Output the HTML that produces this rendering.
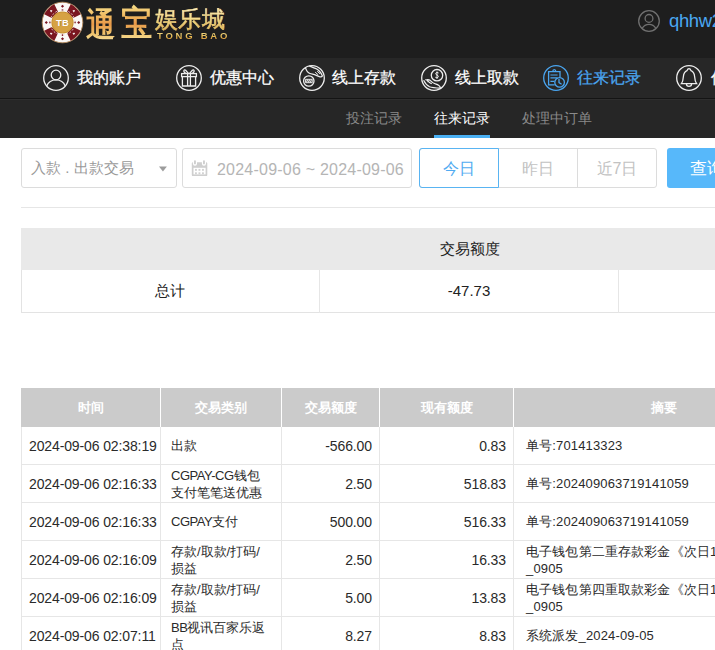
<!DOCTYPE html>
<html><head><meta charset="utf-8">
<style>
*{box-sizing:border-box;margin:0;padding:0}
html,body{width:715px;height:650px;overflow:hidden;background:#fff;font-family:"Liberation Sans",sans-serif;color:#333}
.abs{position:absolute}
#top{position:absolute;left:0;top:0;width:715px;height:58px;background:#1e1e1e}
#nav{position:absolute;left:0;top:58px;width:715px;height:40px;background:#272727}
#navline{position:absolute;left:0;top:98px;width:715px;height:1px;background:#141414}
#sub{position:absolute;left:0;top:99px;width:715px;height:39px;background:#262626;border-top:1px solid #2e2e2e}
.nt{position:absolute;top:68px;font-size:16px;line-height:20px;color:#fff;white-space:nowrap;-webkit-text-stroke:0.25px currentColor}
.ic{position:absolute;top:65px;width:26px;height:26px}
.st{position:absolute;top:108px;font-size:14px;line-height:20px;color:#8a8a8a;white-space:nowrap}
.box{position:absolute;top:148px;height:40px;border:1px solid #dcdcdc;border-radius:3px;background:#fff}
.gbtn{position:absolute;top:149px;height:40px;font-size:16px;line-height:40px;text-align:center;color:#c2c2c2}
table{border-collapse:collapse}
#sum{position:absolute;left:21px;top:228px;width:897px}
#sum td{border:1px solid #e3e3e3;height:42px;text-align:center;font-size:15px;color:#222}
#sum .h td{background:#e9e9e9;border-color:#e9e9e9}
#main{position:absolute;left:21px;top:388px;table-layout:fixed;width:793px;border-collapse:separate;border-spacing:0}
#main th{background:#cbcbcb;color:#fff;font-weight:bold;font-size:13px;height:39px;border:none;border-right:1px solid #fff;text-align:center;padding:0}
#main td{border-right:1px solid #e6e6e6;border-bottom:1px solid #e6e6e6;height:38px;font-size:13px;line-height:17px;color:#2a2a2a;padding:0 9px 0 10px;white-space:nowrap;overflow:hidden}
#main td:first-child{border-left:1px solid #e6e6e6;font-size:14px;letter-spacing:-0.12px;padding-left:7px;padding-top:1px}
.l{letter-spacing:-0.45px}
#main td.r{font-size:14px;letter-spacing:-0.1px;padding-right:7px;padding-top:1px}
#main td:last-child{padding-left:12px;letter-spacing:0.15px}
.l{letter-spacing:-0.45px}
#main td.r{text-align:right}
</style></head><body>
<div id="top"></div>
<div id="nav"></div>
<div id="navline"></div>
<div id="sub"></div>

<!-- logo chip -->
<svg class="abs" style="left:41px;top:1px" width="43" height="43" viewBox="-21.5 -21.5 43 43">
  <defs><clipPath id="cc"><circle r="19.9"/></clipPath></defs>
  <circle r="20.3" fill="#fbf8f6" stroke="#b48a5c" stroke-width="0.9"/>
  <g fill="#7a1620" clip-path="url(#cc)"><path d="M10.75 4.53 L19.37 8.63 L8.63 19.37 L4.53 10.75 Z"/><path d="M-4.53 10.75 L-8.63 19.37 L-19.37 8.63 L-10.75 4.53 Z"/><path d="M-10.75 -4.53 L-19.37 -8.63 L-8.63 -19.37 L-4.53 -10.75 Z"/><path d="M4.53 -10.75 L8.63 -19.37 L19.37 -8.63 L10.75 -4.53 Z"/></g>
  <g fill="#7a1620"><rect x="15.10" y="-1.10" width="2.2" height="2.2" transform="rotate(45 16.20 0.00)"/><circle cx="12.60" cy="0.00" r="0.9"/><rect x="-1.10" y="15.10" width="2.2" height="2.2" transform="rotate(45 0.00 16.20)"/><circle cx="0.00" cy="12.60" r="0.9"/><rect x="-17.30" y="-1.10" width="2.2" height="2.2" transform="rotate(45 -16.20 0.00)"/><circle cx="-12.60" cy="0.00" r="0.9"/><rect x="-1.10" y="-17.30" width="2.2" height="2.2" transform="rotate(45 -0.00 -16.20)"/><circle cx="-0.00" cy="-12.60" r="0.9"/></g>
  <g fill="#f5eeee"><path d="M11.31 12.61 L10.11 10.91 A0.7 0.7 0 0 1 11.31 10.41 A0.7 0.7 0 0 1 12.51 10.91 Z"/><path d="M-11.31 12.61 L-12.51 10.91 A0.7 0.7 0 0 1 -11.31 10.41 A0.7 0.7 0 0 1 -10.11 10.91 Z"/><path d="M-11.31 -10.01 L-12.51 -11.71 A0.7 0.7 0 0 1 -11.31 -12.21 A0.7 0.7 0 0 1 -10.11 -11.71 Z"/><path d="M11.31 -10.01 L10.11 -11.71 A0.7 0.7 0 0 1 11.31 -12.21 A0.7 0.7 0 0 1 12.51 -11.71 Z"/></g>
  <circle r="12.5" fill="none" stroke="#f2e8e8" stroke-width="0.9" stroke-dasharray="1.8 1.6"/>
  <circle r="11.1" fill="#c48c2c"/>
  <circle r="10.3" fill="#d6a244"/>
  <text x="0.3" y="3.9" font-family="Liberation Sans" font-size="9.6" font-weight="bold" fill="#8a6020" text-anchor="middle">TB</text>
  <text x="0" y="3.5" font-family="Liberation Sans" font-size="9.6" font-weight="bold" fill="#fff" text-anchor="middle">TB</text>
</svg>
<!-- logo text -->
<div class="abs" style="left:86px;top:5px;font-size:29px;line-height:34px;font-weight:bold;transform:scaleY(1.13);transform-origin:0 0;background:linear-gradient(#f7e08a 0%,#f0b860 30%,#e89848 50%,#efc068 72%,#f8e8a8 100%);-webkit-background-clip:text;background-clip:text;-webkit-text-fill-color:transparent">通</div>
<div class="abs" style="left:121px;top:4px;font-size:31px;line-height:35px;font-weight:bold;transform:scaleY(1.12);transform-origin:0 0;background:linear-gradient(#f7e08a 0%,#f0b860 30%,#e89848 50%,#efc068 72%,#f8e8a8 100%);-webkit-background-clip:text;background-clip:text;-webkit-text-fill-color:transparent">宝</div>
<div class="abs" style="left:155px;top:8px;font-size:22.5px;line-height:24px;letter-spacing:0.3px;-webkit-text-stroke:0.35px #f0d07a;background:linear-gradient(#fcf2c8 0%,#f2d888 50%,#deae4c 100%);-webkit-background-clip:text;background-clip:text;-webkit-text-fill-color:transparent">娱乐城</div>
<div class="abs" style="left:157px;top:31px;font-size:9.5px;line-height:9px;font-weight:bold;letter-spacing:2.75px;background:linear-gradient(#f6e39a 0%,#e8bd55 60%,#d08a30 100%);-webkit-background-clip:text;background-clip:text;-webkit-text-fill-color:transparent">TONG BAO</div>
<!-- user top right -->
<svg class="abs" style="left:637px;top:9px" width="24" height="24" viewBox="0 0 24 24" fill="none" stroke="#707070" stroke-width="1.3">
  <circle cx="12" cy="12" r="10.3"/>
  <circle cx="12" cy="9.4" r="3.9"/>
  <path d="M5.2 19.4 A7.8 7.8 0 0 1 18.8 19.4"/>
</svg>
<div class="abs" style="left:669px;top:9px;font-size:18.5px;line-height:24px;letter-spacing:-0.4px;color:#4aa8f2">qhhw2</div>

<!-- nav icons -->
<svg class="ic" style="left:43px" viewBox="0 0 26 26" fill="none" stroke="#eee" stroke-width="1.3">
  <circle cx="13" cy="13" r="12.3"/>
  <circle cx="13" cy="10" r="4.8"/>
  <path d="M3.6 21.2 A10.2 10.2 0 0 1 22.4 21.2"/>
</svg>
<div class="nt" style="left:77px">我的账户</div>

<svg class="ic" style="left:176px" viewBox="0 0 26 26" fill="none" stroke="#eee" stroke-width="1.3">
  <circle cx="13" cy="13" r="12.3"/>
  <rect x="5.6" y="8.6" width="14.8" height="3"/>
  <path d="M6.4 11.6 V21 H19.6 V11.6"/>
  <path d="M11.6 8.6 V21 M14.4 8.6 V21"/>
  <path d="M12.4 8.4 L9.6 5.2 C9 4.6 8 4.8 7.9 5.6 C7.8 6.4 8.4 7.8 10 8.4 M13.6 8.4 L16.4 5.2 C17 4.6 18 4.8 18.1 5.6 C18.2 6.4 17.6 7.8 16 8.4"/>
</svg>
<div class="nt" style="left:210px">优惠中心</div>

<svg class="ic" style="left:299px" viewBox="0 0 26 26" fill="none" stroke="#eee" stroke-width="1.3">
  <circle cx="13" cy="13" r="12.3"/>
  <circle cx="9.8" cy="16" r="5.2"/>
  <path d="M6.6 14.3 H13.2 V17.7 H6.6 Z" stroke-width="1"/>
  <path d="M7.4 17.3 L8.4 14.7 L9.4 17.3 L10.4 14.7 L11.4 17.3 L12.4 14.7" stroke-width="0.9"/>
  <path d="M6.4 2.6 C7.4 5.6 9 7.8 11 8.5 C13 9.2 15 9.4 16.8 10.2 C18.4 10.9 19.6 11.6 21 11.8 C22 12 23 11.6 23.4 10.9 C21.6 6.6 19 4.3 16.5 3.3 C14.5 2.6 12.5 2 10.4 1.2"/>
  <path d="M16.2 7.2 L19.2 9.8 M18.2 6.2 L21 8.8" stroke-width="1"/>
</svg>
<div class="nt" style="left:332px">线上存款</div>

<svg class="ic" style="left:421px" viewBox="0 0 26 26" fill="none" stroke="#eee" stroke-width="1.3">
  <circle cx="13" cy="13" r="12.3"/>
  <circle cx="16" cy="10.2" r="5.7"/>
  <path d="M17.6 8 C17 7.2 14.7 7.2 14.7 8.7 C14.7 10.2 17.4 9.9 17.4 11.5 C17.4 13 15 13.1 14.3 12.2 M16 6.5 V13.9" stroke-width="1"/>
  <path d="M2.6 15.2 C4 18 6 20.6 8.6 21.8 C11 22.8 14 23 19.5 23.2 C19.2 21.2 17.5 19.6 14.5 18.8 C12.8 18.3 11.6 17.8 10.6 16.6 C9.6 15.5 8 14.4 6.6 14.6 C6 15 6.4 16 7.4 17 M4.4 14.6 C5.6 14.4 6.8 15.6 7.8 16.8 C8.6 17.8 9.6 18.4 10.8 18.6" stroke-width="1.2"/>
</svg>
<div class="nt" style="left:455px">线上取款</div>

<svg class="ic" style="left:543px" viewBox="0 0 26 26" fill="none" stroke="#4aa5ef" stroke-width="1.3">
  <circle cx="13" cy="13" r="12.3"/>
  <path d="M11.6 19.8 H5.6 V6.6 H17 V12.2"/>
  <path d="M9.8 6.6 C9.8 4 12.8 4 12.8 6.6"/>
  <path d="M7.4 10 H14.6 M7.4 12.8 H14.6 M7.4 16.4 H11.4" stroke-width="1.2"/>
  <circle cx="16.6" cy="17.4" r="4.8"/>
  <path d="M16 13.9 V17.6 L18.6 19.2"/>
</svg>
<div class="nt" style="left:577px;color:#4aa5ef">往来记录</div>

<svg class="ic" style="left:676px;top:65px" viewBox="0 0 26 26" fill="none" stroke="#eee" stroke-width="1.3">
  <circle cx="13" cy="13" r="12.3"/>
  <path d="M5.4 18.6 H20.6 C19 16.6 18.8 14.5 18.6 11.5 C18.4 8.5 17 6.5 15 5.6 C14.6 4.4 13.8 3.6 13 3.6 C12.2 3.6 11.4 4.4 11 5.6 C9 6.5 7.6 8.5 7.4 11.5 C7.2 14.5 7 16.6 5.4 18.6 Z"/>
  <path d="M10.4 18.7 C10.4 22.2 15.6 22.2 15.6 18.7"/>
</svg>
<div class="nt" style="left:711px">信</div>

<!-- sub nav -->
<div class="st" style="left:346px">投注记录</div>
<div class="st" style="left:434px;color:#fff">往来记录</div>
<div class="abs" style="left:434px;top:135px;width:56px;height:3px;background:#4ab0f3"></div>
<div class="st" style="left:522px">处理中订单</div>

<!-- filters -->
<div class="box" style="left:21px;width:156px"></div>
<div class="abs" style="left:31px;top:158px;font-size:15px;line-height:20px;color:#999">入款 . 出款交易</div>
<svg class="abs" style="left:158px;top:166px" width="10" height="7" viewBox="0 0 10 7"><path d="M1 0.4 H8.9 L4.95 5.6 Z" fill="#9c9c9c"/></svg>

<div class="box" style="left:182px;width:230px"></div>
<svg class="abs" style="left:187px;top:156px" width="25" height="24" viewBox="0 0 25 24">
  <rect x="4.8" y="6.3" width="15.5" height="13.8" rx="1.2" fill="#cfcfcf"/>
  <rect x="6.5" y="11.8" width="12.1" height="6.6" fill="#fff"/>
  <g fill="#d2d2d2"><rect x="8" y="12.9" width="1.9" height="1.9"/><rect x="11.5" y="12.9" width="1.9" height="1.9"/><rect x="15" y="12.9" width="1.9" height="1.9"/><rect x="8" y="16.3" width="1.9" height="1.9"/><rect x="11.5" y="16.3" width="1.9" height="1.9"/><rect x="15" y="16.3" width="1.9" height="1.9"/></g>
  <rect x="5.9" y="3.2" width="4.1" height="6.6" rx="2" fill="#fff"/>
  <rect x="14.9" y="3.2" width="4.1" height="6.6" rx="2" fill="#fff"/>
  <rect x="7" y="4.3" width="1.9" height="4" rx="0.9" fill="#cfcfcf"/>
  <rect x="16" y="4.3" width="1.9" height="4" rx="0.9" fill="#cfcfcf"/>
</svg>
<div class="abs" style="left:217px;top:159.5px;font-size:16px;line-height:20px;letter-spacing:0.22px;color:#b5b5b5">2024-09-06 ~ 2024-09-06</div>

<div class="box" style="left:419px;width:238px"></div>
<div class="abs" style="left:498px;top:149px;width:1px;height:38px;background:#dcdcdc"></div>
<div class="abs" style="left:577px;top:149px;width:1px;height:38px;background:#dcdcdc"></div>
<div class="abs" style="left:419px;top:148px;width:80px;height:40px;border:1px solid #59b4f2;border-radius:3px 0 0 3px"></div>
<div class="gbtn" style="left:419px;width:80px;color:#50abf1">今日</div>
<div class="gbtn" style="left:498px;width:80px">昨日</div>
<div class="gbtn" style="left:577px;width:80px">近7日</div>
<div class="abs" style="left:667px;top:148px;width:100px;height:40px;background:#57b8fa;border-radius:3px;color:#fff;font-size:17px;line-height:42px;padding-left:23px">查询</div>

<div class="abs" style="left:21px;top:207px;width:700px;height:1px;background:#e6e6e6"></div>

<!-- summary -->
<div class="abs" style="left:21px;top:228px;width:700px;height:42px;background:#e9e9e9"></div>
<div class="abs" style="left:21px;top:270px;width:700px;height:43px;border-left:1px solid #e3e3e3;border-bottom:1px solid #e3e3e3"></div>
<div class="abs" style="left:319px;top:270px;width:1px;height:43px;background:#e6e6e6"></div>
<div class="abs" style="left:618px;top:270px;width:1px;height:43px;background:#e6e6e6"></div>
<div class="abs" style="left:21px;top:228px;width:897px;height:42px;line-height:42px;text-align:center;font-size:15px;color:#222">交易额度</div>
<div class="abs" style="left:21px;top:270px;width:298px;height:42px;line-height:42px;text-align:center;font-size:15px;color:#222">总计</div>
<div class="abs" style="left:320px;top:270px;width:298px;height:42px;line-height:42px;text-align:center;font-size:15px;color:#222">-47.73</div>

<!-- main table -->
<table id="main">
<colgroup><col style="width:140px"><col style="width:121px"><col style="width:98px"><col style="width:134px"><col style="width:300px"></colgroup>
<tr><th>时间</th><th>交易类别</th><th>交易额度</th><th>现有额度</th><th>摘要</th></tr>
<tr><td>2024-09-06 02:38:19</td><td>出款</td><td class="r">-566.00</td><td class="r">0.83</td><td>单号:701413323</td></tr>
<tr><td>2024-09-06 02:16:33</td><td><span class="l">CGPAY-CG</span>钱包<br>支付笔笔送优惠</td><td class="r">2.50</td><td class="r">518.83</td><td>单号:202409063719141059</td></tr>
<tr><td>2024-09-06 02:16:33</td><td><span class="l">CGPAY</span>支付</td><td class="r">500.00</td><td class="r">516.33</td><td>单号:202409063719141059</td></tr>
<tr><td>2024-09-06 02:16:09</td><td>存款/取款/打码/<br>损益</td><td class="r">2.50</td><td class="r">16.33</td><td>电子钱包第二重存款彩金《次日1<br>_0905</td></tr>
<tr><td>2024-09-06 02:16:09</td><td>存款/取款/打码/<br>损益</td><td class="r">5.00</td><td class="r">13.83</td><td>电子钱包第四重取款彩金《次日1<br>_0905</td></tr>
<tr><td>2024-09-06 02:07:11</td><td><span class="l">BB</span>视讯百家乐返<br>点</td><td class="r">8.27</td><td class="r">8.83</td><td>系统派发_2024-09-05</td></tr>
</table>
</body></html>
